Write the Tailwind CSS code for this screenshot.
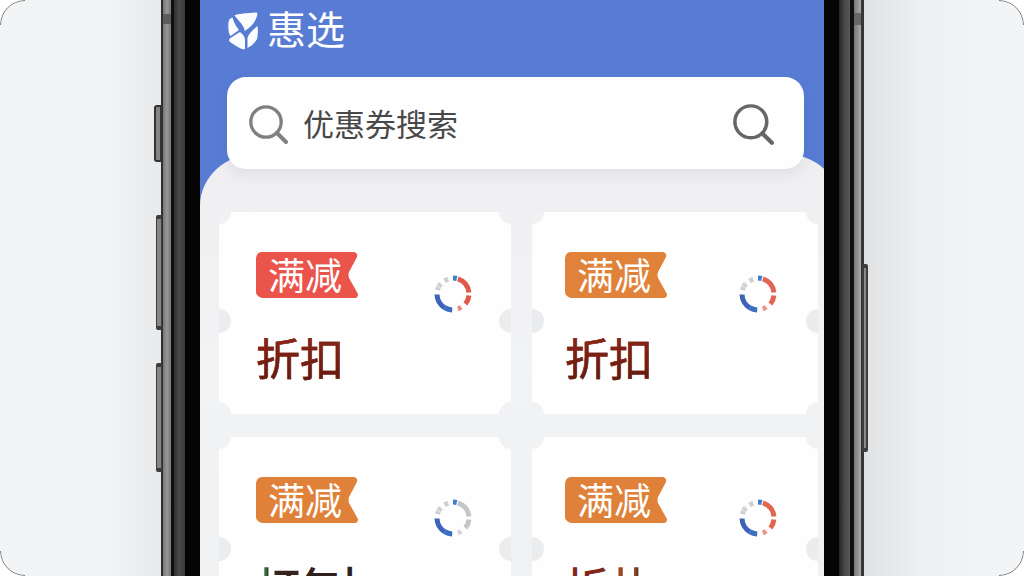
<!DOCTYPE html>
<html lang="zh-CN">
<head>
<meta charset="utf-8">
<title>惠选</title>
<script src="https://cdn.jsdelivr.net/npm/@tailwindcss/browser@4"></script>
</head>
<body class="bg-white font-['Noto_Sans_CJK_SC',sans-serif]">
<svg class="hidden">
  <symbol id="tag" viewBox="0 0 102 46"><path d="M6 0H98Q102 1 101 5L93 20Q92 23 93 26L102 42Q102 46 99 46H6Q0 44 0 40V6Q1 0 6 0Z" fill="currentColor"/></symbol>
  <symbol id="lens" viewBox="0 0 40 40"><circle cx="17" cy="17" r="15.2" fill="none" stroke="currentColor" stroke-width="3.3"/><path d="M28 28L37 37" stroke="currentColor" stroke-width="4" stroke-linecap="round"/></symbol>
  <symbol id="ring" viewBox="-20 -20 40 40">
    <g transform="rotate(-90)" fill="none" stroke-width="5">
      <g stroke="#cfd0d2"><circle r="16" pathLength="360" stroke-dasharray="11 349" stroke-dashoffset="-284"/><circle r="16" pathLength="360" stroke-dasharray="14 346" stroke-dashoffset="-297"/><circle r="15.6" pathLength="360" stroke-dasharray="15 345" stroke-dashoffset="-327"/></g>
      <circle r="16" stroke="#3d7fca" pathLength="360" stroke-dasharray="14 346"/>
      <circle r="16" stroke="#3e62b8" pathLength="360" stroke-dasharray="57 303" stroke-dashoffset="-211"/>
      <circle r="16" stroke="#3a6fc0" pathLength="360" stroke-dasharray="28 332" stroke-dashoffset="-183"/>
    </g>
  </symbol>
  <symbol id="ring-warm" viewBox="-20 -20 40 40">
    <g transform="rotate(-90)" fill="none" stroke-width="5" stroke="currentColor">
      <circle r="16" pathLength="360" stroke-dasharray="66 294" stroke-dashoffset="-18"/>
      <circle r="16" pathLength="360" stroke-dasharray="33 327" stroke-dashoffset="-96"/>
      <circle r="15.6" pathLength="360" stroke-dasharray="14 346" stroke-dashoffset="-148" stroke-opacity=".7"/>
    </g>
  </symbol>
</svg>
<div class="relative flex h-[576px] w-[1024px] overflow-hidden rounded-[25px] bg-[#f3f4f6]">
  <div class="w-[161px] bg-gradient-to-r from-[#f3f4f6] via-[#f2f3f5] via-70% to-[#e8e9eb]"></div>
  <div class="flex w-[39px]">
    <div class="w-[2px] bg-[#303030]"></div>
    <div class="w-[8px] bg-gradient-to-r from-[#777] via-[#979797] to-[#777]"><div class="mt-[14px] h-[10px] bg-[#5c5c5c]"></div></div>
    <div class="w-[3px] bg-[#101010]"></div>
    <div class="w-[11px] bg-gradient-to-r from-[#303030] via-[#494949] to-[#3a3a3a]"></div>
    <div class="w-[15px] bg-[#050505]"></div>
  </div>

  <main class="relative h-full w-[624px] overflow-hidden bg-[#587cd4]">
    <div class="absolute top-[154px] left-0 -right-[17px] bottom-0 rounded-t-[56px_52px] bg-gradient-to-b from-[#efeff1] via-[#f2f3f4] to-[#f0f1f3]"></div>
    <div class="relative flex h-full flex-col">
      <header class="flex h-[77px] shrink-0 items-start pl-[27px]">
        <svg class="mt-[12px] h-[38px] w-[32px] shrink-0" viewBox="0 0 32 38" fill="#fafcff">
          <path d="M7.500 3.500C11 2 20 1 29 .6C30.500 .6 30.500 2 30 4C28 11 23 16 17.500 19C18 15 13 10 7.500 3.500Z"/>
          <path d="M5.500 5.500C7 11 9 14 12 18L3.500 24C1 21 .8 12 2 8Q3 6 5.500 5.500Z"/>
          <path d="M13 20Q17.500 23 18 28V37Q16 39 3 30Q1 27.500 3.500 26Z"/>
          <path d="M30.500 14Q31.500 21 30 27Q27 33 20.500 36V26Q21 22 30.500 14Z"/>
        </svg>
        <h1 class="mt-[7px] ml-[8px] text-[39px] leading-[40px] font-normal text-white">惠选</h1>
      </header>
      <label class="ml-[27px] flex h-[92px] w-[577px] shrink-0 items-center rounded-[19px] bg-[#fefefe] pr-[29px] pl-[22px] shadow-[0_6px_14px_rgba(60,70,90,0.08)]">
        <svg class="mt-[4px] h-[40px] w-[40px] text-[#808080]"><use href="#lens"/></svg>
        <span class="ml-[14px] flex-1 text-[31px] leading-[40px] font-normal text-[#484848]">优惠券搜索</span>
        <svg class="mt-[4px] h-[42px] w-[42px] text-[#666]"><use href="#lens"/></svg>
      </label>
      <section class="mt-[43px] ml-[19px] grid shrink-0 grid-cols-[292px_286px] grid-rows-[202px_202px] gap-x-[21px] gap-y-[23px]">
        <article class="relative overflow-hidden bg-[#fefefe] pt-[40px] pl-[37px]">
          <div class="relative flex h-[46px] w-[102px] pl-[12px] text-[#ea544b]"><svg class="absolute inset-0 h-full w-full"><use href="#tag"/></svg><span class="relative text-[37px] leading-[45px] whitespace-nowrap text-white">满减</span></div>
          <p class="mt-[31px] w-max bg-gradient-to-b from-[#952719] to-[#5c190d] bg-clip-text text-[44px] leading-[56px] text-transparent [-webkit-text-stroke:0.5px_#7a2015]">折扣</p>
          <svg class="absolute top-[62px] left-[214px] h-10 w-10 text-[#df5b49]"><use href="#ring"/><use href="#ring-warm"/></svg>
          <i class="absolute -top-3 -left-3 h-6 w-6 rounded-full bg-[#f0f1f2]"></i><i class="absolute -top-3 -right-3 h-6 w-6 rounded-full bg-[#f0f1f2]"></i>
          <i class="absolute top-[97px] -left-3 h-6 w-6 rounded-full bg-[#ebecee]"></i><i class="absolute top-[97px] -right-3 h-6 w-6 rounded-full bg-[#ebecee]"></i>
          <i class="absolute -bottom-3 -left-3 h-6 w-6 rounded-full bg-[#f1f2f4]"></i><i class="absolute -right-3 -bottom-3 h-6 w-6 rounded-full bg-[#f1f2f4]"></i>
        </article>
        <article class="relative overflow-hidden bg-[#fefefe] pt-[40px] pl-[33px]">
          <div class="relative flex h-[46px] w-[102px] pl-[12px] text-[#e0823a]"><svg class="absolute inset-0 h-full w-full"><use href="#tag"/></svg><span class="relative text-[37px] leading-[45px] whitespace-nowrap text-white">满减</span></div>
          <p class="mt-[31px] w-max bg-gradient-to-b from-[#952719] to-[#5c190d] bg-clip-text text-[44px] leading-[56px] text-transparent [-webkit-text-stroke:0.5px_#7a2015]">折扣</p>
          <svg class="absolute top-[62px] left-[206px] h-10 w-10 text-[#e16552]"><use href="#ring"/><use href="#ring-warm"/></svg>
          <i class="absolute -top-3 -left-3 h-6 w-6 rounded-full bg-[#f0f1f2]"></i><i class="absolute -top-3 -right-3 h-6 w-6 rounded-full bg-[#f0f1f2]"></i>
          <i class="absolute top-[97px] -left-3 h-6 w-6 rounded-full bg-[#ebecee]"></i><i class="absolute top-[97px] -right-3 h-6 w-6 rounded-full bg-[#ebecee]"></i>
          <i class="absolute -bottom-3 -left-3 h-6 w-6 rounded-full bg-[#f1f2f4]"></i><i class="absolute -right-3 -bottom-3 h-6 w-6 rounded-full bg-[#f1f2f4]"></i>
        </article>
        <article class="relative overflow-hidden bg-[#fefefe] pt-[40px] pl-[37px]">
          <div class="relative flex h-[46px] w-[102px] pl-[12px] text-[#e08139]"><svg class="absolute inset-0 h-full w-full"><use href="#tag"/></svg><span class="relative text-[37px] leading-[45px] whitespace-nowrap text-white">满减</span></div>
          <p class="mt-[35px] text-[44px] leading-[56px] font-medium whitespace-nowrap text-[#2e201c]"><span class="bg-gradient-to-r from-[#462019] from-10% via-[#208344] via-20% to-[#38221d] to-30% bg-clip-text text-transparent">打</span><span class="-ml-[2px]">包</span><span class="-ml-[5px]">扌</span></p>
          <svg class="absolute top-[61px] left-[214px] h-10 w-10 text-[#c4c5c7]"><use href="#ring"/><use href="#ring-warm"/></svg>
          <i class="absolute -top-3 -left-3 h-6 w-6 rounded-full bg-[#f1f2f4]"></i><i class="absolute -top-3 -right-3 h-6 w-6 rounded-full bg-[#f1f2f4]"></i>
          <i class="absolute top-[100px] -left-3 h-6 w-6 rounded-full bg-[#ebecee]"></i><i class="absolute top-[100px] -right-3 h-6 w-6 rounded-full bg-[#ebecee]"></i>
        </article>
        <article class="relative overflow-hidden bg-[#fefefe] pt-[40px] pl-[33px]">
          <div class="relative flex h-[46px] w-[102px] pl-[12px] text-[#e08139]"><svg class="absolute inset-0 h-full w-full"><use href="#tag"/></svg><span class="relative text-[37px] leading-[45px] whitespace-nowrap text-white">满减</span></div>
          <p class="mt-[35px] flex w-max text-[44px] leading-[56px] font-medium whitespace-nowrap text-[#802919]">折<span class="bg-gradient-to-r from-[#99491e] from-50% to-[#222] to-60% bg-clip-text tracking-[8px] text-transparent">扑</span></p>
          <svg class="absolute top-[61px] left-[206px] h-10 w-10 text-[#e06650]"><use href="#ring"/><use href="#ring-warm"/></svg>
          <i class="absolute -top-3 -left-3 h-6 w-6 rounded-full bg-[#f1f2f4]"></i><i class="absolute -top-3 -right-3 h-6 w-6 rounded-full bg-[#f1f2f4]"></i>
          <i class="absolute top-[100px] -left-3 h-6 w-6 rounded-full bg-[#ebecee]"></i><i class="absolute top-[100px] -right-3 h-6 w-6 rounded-full bg-[#ebecee]"></i>
        </article>
      </section>
    </div>
  </main>

  <div class="flex w-[40px]">
    <div class="w-[15px] bg-[#050505]"></div>
    <div class="w-[11px] bg-gradient-to-r from-[#252525] via-[#484848] to-[#585858]"></div>
    <div class="w-[4px] bg-[#101010]"></div>
    <div class="w-[7px] bg-gradient-to-r from-[#777] to-[#aaa]"><div class="mt-[13px] h-[12px] bg-[#666]"></div></div>
    <div class="w-[3px] bg-[#353535]"></div>
  </div>
  <div class="flex-1 bg-gradient-to-r from-[#e0e1e3] via-[#eeeff1] via-35% to-[#f3f4f6] to-75%"></div>

  <i class="absolute top-[105px] left-[154px] h-[57px] w-[8px] rounded-l-[3px] border-2 border-[#333] bg-[#858585]"></i>
  <i class="absolute top-[215px] left-[156px] h-[115px] w-[6px] rounded-l-[2px] border-x border-y-4 border-[#3d3d3d] bg-[#858585]"></i>
  <i class="absolute top-[363px] left-[156px] h-[109px] w-[6px] rounded-l-[2px] border-x border-y-4 border-[#3d3d3d] bg-[#858585]"></i>
  <i class="absolute top-[264px] left-[862px] h-[188px] w-[6px] rounded-r-[2px] border-x-2 border-y-4 border-[#3d3d3d] bg-[#8b8b8b]"></i>

  <svg class="absolute inset-0 h-full w-full" viewBox="0 0 1024 576" fill="none" stroke="#777"><path d="M.5 25A24.500 24.500 0 0 1 25 .5M999 .5A24.500 24.500 0 0 1 1023.500 25M1023.500 551A24.500 24.500 0 0 1 999 575.500M25 575.500A24.500 24.500 0 0 1 .5 551"/></svg>
</div>
</body>
</html>
